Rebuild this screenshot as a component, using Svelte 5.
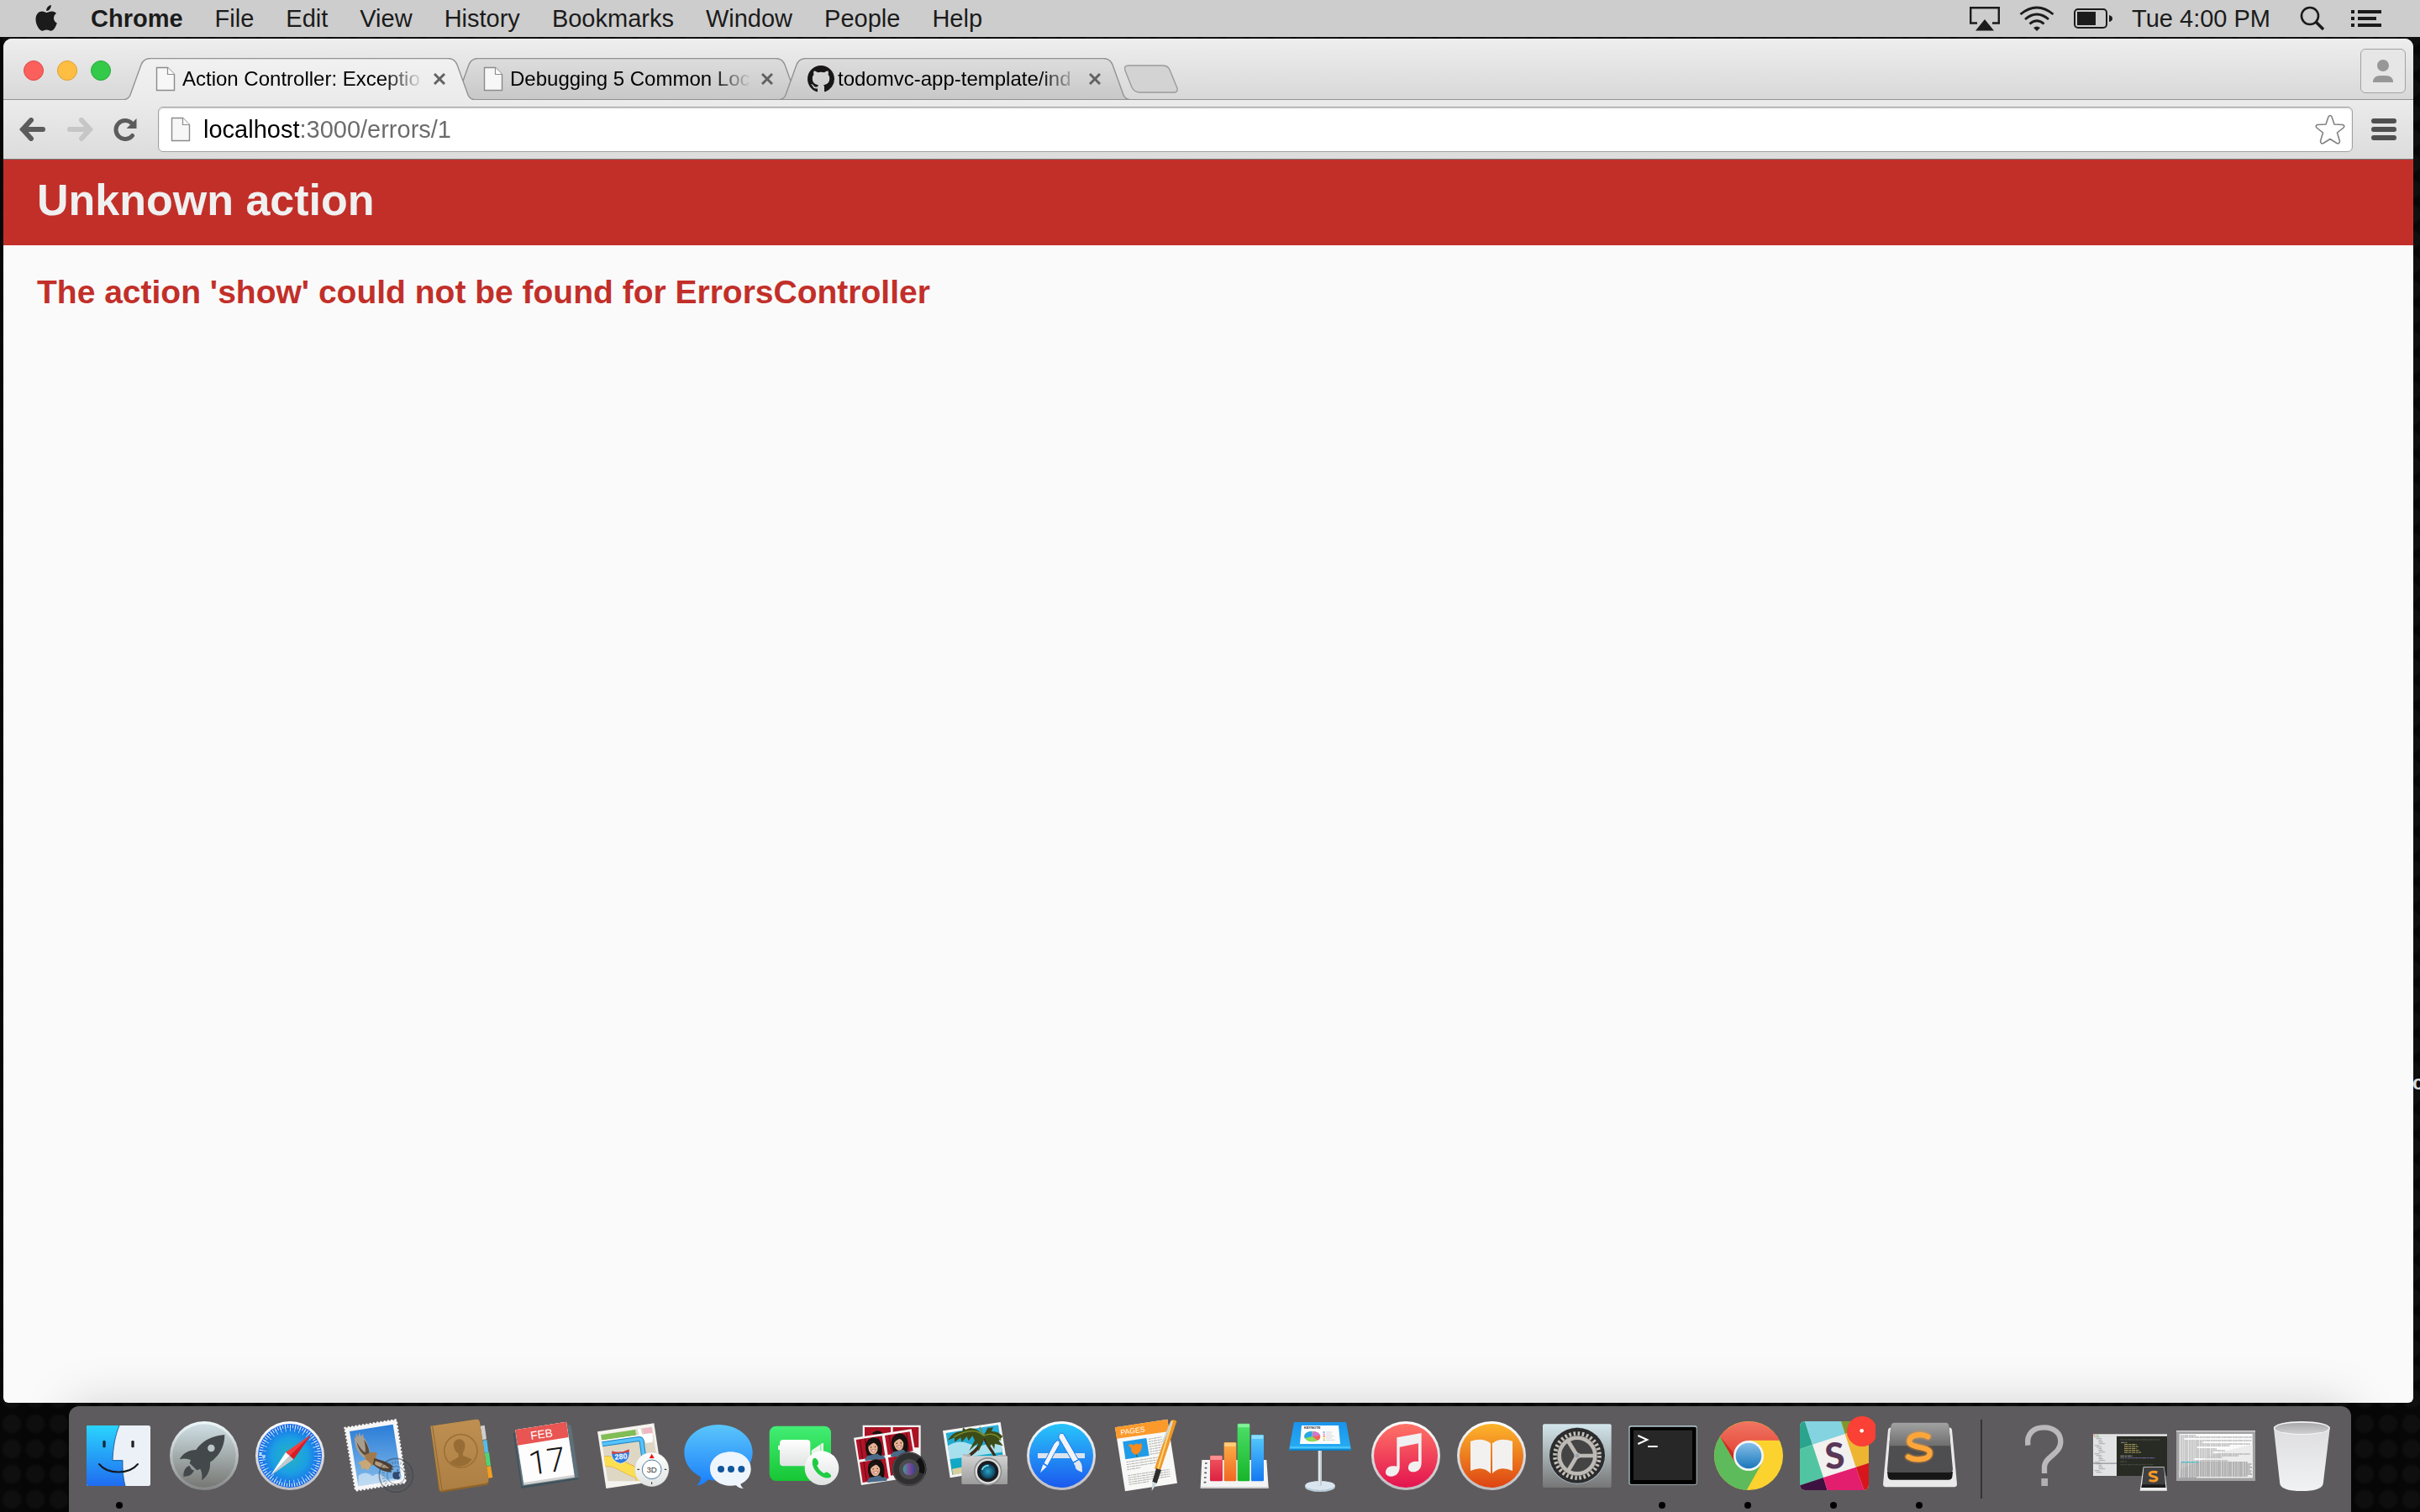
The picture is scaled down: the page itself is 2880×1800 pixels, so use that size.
<script>
  const menus = ['File', 'Edit', 'View', 'History', 'Bookmarks', 'Window', 'People', 'Help'];
  const tabs = [
    { title: 'Action Controller: Exceptio', icon: 'page', active: true },
    { title: 'Debugging 5 Common Loc', icon: 'page', active: false },
    { title: 'todomvc-app-template/ind', icon: 'github', active: false }
  ];
  let address = $state('localhost:3000/errors/1');

  const sidebarRows = Array.from({ length: 22 }, (_, i) => ({ y: 182 + i * 6, x: [98, 104, 112, 112, 114][i % 5], w: [18, 12, 22, 20, 16][(i * 3) % 5] }));
  const codeRows = [
    { x: 190, y: 192, w: 140, c: '#55564a' }, { x: 192, y: 202, w: 22, c: '#8f8f80' },
    { x: 204, y: 209, w: 44, c: '#b3a85c' }, { x: 204, y: 216, w: 52, c: '#b3a85c' },
    { x: 204, y: 223, w: 44, c: '#b3a85c' }, { x: 204, y: 230, w: 54, c: '#b3a85c' },
    { x: 204, y: 237, w: 60, c: '#b3a85c' }, { x: 190, y: 250, w: 44, c: '#9a9a8c' },
    { x: 190, y: 257, w: 124, c: '#7568a0' }, { x: 190, y: 270, w: 22, c: '#55564a' },
    { x: 190, y: 281, w: 120, c: '#4a4b40' }
  ];
  const logRows = Array.from({ length: 26 }, (_, i) => ({
    y: 177 + i * 6,
    w: [56, 256, 14, 254, 80, 250, 176, 60, 130, 160, 118, 250, 208, 150, 50, 170, 240, 254, 250, 256, 248, 254, 252, 256, 240, 58][i],
    strong: i > 15
  }));
</script>

{#snippet page()}
  <svg viewBox="0 0 24 30" class="page-icon" aria-hidden="true">
    <path d="M1.5 1.5H14.5L22.5 9.500V28.500H1.500Z" fill="#f7f7f7" stroke="#8b8b8b" stroke-width="1.400" />
    <path d="M14.500 1.500V9.500H22.500" fill="#fff" stroke="#8b8b8b" stroke-width="1.200" />
  </svg>
{/snippet}

{#snippet github()}
  <svg viewBox="0 0 16 16" class="github-icon" aria-hidden="true">
    <path fill="#181616" d="M8 0C3.58 0 0 3.58 0 8c0 3.54 2.29 6.53 5.47 7.59.4.07.55-.17.55-.38 0-.19-.01-.82-.01-1.49-2.01.37-2.53-.49-2.69-.94-.09-.23-.48-.94-.82-1.13-.28-.15-.68-.52-.01-.53.63-.01 1.08.58 1.23.82.72 1.21 1.87.87 2.33.66.07-.52.28-.87.51-1.07-1.78-.2-3.64-.89-3.64-3.95 0-.87.31-1.59.82-2.15-.08-.2-.36-1.02.08-2.12 0 0 .67-.21 2.2.82.64-.18 1.32-.27 2-.27s1.36.09 2 .27c1.53-1.04 2.200-.82 2.200-.82.44 1.100.16 1.920.08 2.120.51.56.82 1.270.82 2.150 0 3.070-1.870 3.750-3.650 3.950.29.25.54.73.54 1.480 0 1.070-.01 1.930-.01 2.200 0 .21.15.46.55.38A8.010 8.010 0 0 0 16 8c0-4.420-3.580-8-8-8z" />
  </svg>
{/snippet}

{#snippet finder()}
  <rect x="129" y="141" width="228" height="216" rx="7" fill="#ecf1f8" />
  <path d="M136 141H246C230 180 224 220 222 265H258C257 300 260 330 267 357H136Q129 357 129 350V148Q129 141 136 141Z" fill="url(#gFinder)" />
  <path d="M246 141C230 180 224 220 222 266H258C257 300 260 330 267 357" fill="none" stroke="#14508c" stroke-width="2.500" />
  <path d="M174 279C205 317 280 317 312 279" fill="none" stroke="#14181f" stroke-width="6" stroke-linecap="round" />
  <rect x="187" y="195" width="10" height="25" rx="4" fill="#14283c" /><rect x="289" y="195" width="10" height="25" rx="4" fill="#222" />
{/snippet}

{#snippet launchpad()}
  <circle cx="549" cy="249" r="123" fill="url(#gLpRing)" />
  <circle cx="549" cy="249" r="113" fill="url(#gLp)" />
  <path d="M622 174C575 178 540 198 520 228C495 228 473 240 461 262C475 258 488 259 501 264L497 276L523 301L535 296C541 308 543 322 540 337C562 322 572 298 570 272C604 250 622 215 622 174Z" fill="#43484b" />
  <path d="M497 285C482 288 474 305 475 323C492 324 507 318 513 301L505 299Z" fill="#43484b" />
  <circle cx="574" cy="222" r="14" fill="#bcc5c8" stroke="#30363a" stroke-width="2" />
{/snippet}

{#snippet safari()}
  <circle cx="855" cy="249" r="123" fill="url(#gRing)" />
  <circle cx="855" cy="249" r="114" fill="url(#gSafari)" />
  <circle cx="855" cy="249" r="105" fill="none" stroke="#d5ebfa" stroke-width="12" pathLength="216" stroke-dasharray="1 2" />
  <circle cx="855" cy="249" r="99" fill="none" stroke="#d5ebfa" stroke-width="24" pathLength="216" stroke-dasharray="1 5" opacity=".8" />
  <path d="M931 174L840 237L855 249Z" fill="#ff5a50" /><path d="M931 174L868 262L855 249Z" fill="#c9151e" />
  <path d="M840 237L785 321L855 249Z" fill="#fff" /><path d="M868 262L785 321L855 249Z" fill="#c3c9cd" />
  <path d="M931 174L840 237L868 262Z" fill="#e8222a" opacity=".5" />
{/snippet}

{#snippet mail()}
  <path d="M1052 150L1234 121L1268 344L1090 373Z" fill="#f6f6f6" stroke="#f6f6f6" stroke-width="9" stroke-linecap="round" stroke-dasharray="0 13" />
  <path d="M1068 162L1223 137L1254 333L1099 358Z" fill="url(#gMail)" />
  <path d="M1099 350L1100 320Q1125 300 1150 322Q1175 300 1200 335L1254 325V333L1099 358Z" fill="#e8f0f8" opacity=".6" />
  <path d="M1086 178L1092 188L1091 168L1100 182L1102 165L1109 180L1116 170L1118 184C1132 198 1139 222 1142 246L1122 258C1098 244 1084 214 1086 178Z" fill="#a89e90" />
  <path d="M1094 200C1098 224 1110 240 1126 250L1140 246C1138 222 1130 204 1120 192C1124 214 1126 226 1124 238C1112 230 1102 216 1094 200Z" fill="#5e4c3c" />
  <path d="M1122 246L1142 238L1158 236L1168 242L1162 250L1164 262L1156 282L1140 284L1126 270Z" fill="#a17a4c" />
  <path d="M1156 258C1180 264 1208 272 1224 288L1218 292L1226 298L1216 300L1218 308C1194 308 1172 298 1152 280Z" fill="#4f3f33" />
  <path d="M1160 268Q1190 276 1210 294Q1180 296 1158 280Z" fill="#b39b80" />
  <path d="M1126 262L1098 274L1108 282L1110 298L1122 294L1134 302L1146 280Z" fill="#c9a878" />
  <g fill="none" stroke="#333f50" opacity=".5"><circle cx="1234" cy="319" r="60" stroke-width="5" /><circle cx="1234" cy="319" r="32" stroke-width="3" /><circle cx="1234" cy="319" r="46" stroke-width="10" stroke-dasharray="5 5" opacity=".6" /></g>
  <path d="M1235 308C1244 302 1248 308 1248 310C1242 315 1243 323 1249 326C1246 334 1240 335 1235 332C1228 335 1222 330 1222 319C1222 309 1228 305 1235 308ZM1236 305Q1236 298 1243 296Q1243 303 1236 305Z" fill="#33486c" />
{/snippet}

{#snippet contacts()}
  <path d="M214 143L230 140L237 190L220 193Z" fill="#cfcfcf" /><path d="M222 194L238 192L244 238L228 240Z" fill="#53bde9" />
  <path d="M230 240L246 237L252 284L236 286Z" fill="#50d472" /><path d="M236 288L252 285L259 327L240 330Z" fill="#f2a01f" />
  <path d="M37 143L200 119Q211 118 213 129L245 339Q246 350 238 354L74 380L66 370Z" fill="#8f6429" />
  <path d="M37 143L200 119Q211 118 213 129L244 334Q245 344 236 347L70 374Z" fill="url(#gContacts)" />
  <path d="M44 144L78 371" stroke="#8f6730" stroke-width="3" />
  <circle cx="145" cy="232" r="59" fill="none" stroke="#9b7136" stroke-width="5" />
  <path d="M120 213C116 185 157 180 160 210C160 225 156 234 153 238V249L185 262C165 293 125 294 106 272L138 253L136 240C127 236 122 228 120 213Z" fill="#976d35" />
{/snippet}

{#snippet calendar()}
  <path d="M332 170L530 138L539 140L567 333L361 367Z" fill="#5e7079" /><path d="M332 170L361 367L567 333L565 328L364 358L338 166Z" fill="#40515a" />
  <path d="M340 157L522 128L552 326L370 354Z" fill="#d2d2d2" /><path d="M340 157L522 128L550 317L370 345Z" fill="#fdfdfd" />
  <path d="M340 157L522 128L530 183L348 212Z" fill="#e85552" />
  <text transform="translate(396 192) rotate(-8)" font-family="Liberation Sans, sans-serif" font-size="41" fill="#fff">FEB</text>
  <text transform="translate(394 318) rotate(-8)" font-family="Roboto, sans-serif" font-weight="300" font-size="118" fill="#151515">17</text>
{/snippet}

{#snippet maps()}
  <path d="M633 163L835 133L866 336L664 366Z" fill="#f5f3ee" />
  <g clip-path="url(#cMaps)">
    <path d="M640 160L850 130V340H660Z" fill="#ded7c4" />
    <path d="M645 175L768 156L771 176L648 194Z" fill="#80bd55" /><path d="M795 152L826 147L829 167L798 171Z" fill="#efb6c4" />
    <path d="M646 194L830 168V192L650 204Z" fill="#fff" /><path d="M775 153L787 152L796 190L786 192ZM800 188L830 184V200L806 204Z" fill="#fff" />
    <path d="M648 208L780 189Q789 188 791 198L798 250" fill="none" stroke="#2180c0" stroke-width="18" /><path d="M648 208L780 189Q789 188 791 198L798 250" fill="none" stroke="#54c3fb" stroke-width="12" />
    <path d="M655 270C700 262 715 290 780 312L800 350" fill="none" stroke="#e8a935" stroke-width="38" /><path d="M655 270C700 262 715 290 780 312L800 350" fill="none" stroke="#fbdf51" stroke-width="34" />
  </g>
  <path d="M684 232Q716 242 746 226C752 250 742 272 716 277C690 272 680 252 684 232Z" fill="#2f7de0" stroke="#fff" stroke-width="2" /><path d="M684 232Q716 242 746 226L747 236L685 243Z" fill="#d8453e" />
  <text transform="translate(695 263) rotate(-5)" font-family="Liberation Sans, sans-serif" font-size="27" font-weight="bold" fill="#fff">280</text>
  <circle cx="827" cy="298" r="61" fill="url(#gWhite)" stroke="#bbb" /><circle cx="827" cy="298" r="34" fill="#fff" stroke="#4f7f9d" stroke-width="3" />
  <text x="827" y="308" text-anchor="middle" font-family="Liberation Sans, sans-serif" font-size="29" fill="#333">3D</text>
  <path d="M827 242L836 258H818Z" fill="#f01414" /><path d="M775 298H783M872 298H880M827 343V351" stroke="#222" stroke-width="3" />
{/snippet}

{#snippet messages()}
  <path d="M1065 138C1132 138 1187 180 1187 237C1187 295 1132 338 1060 338C1045 338 1036 336 1028 334C1020 346 1004 354 986 356C998 347 1003 336 1001 324C965 306 943 275 943 237C943 180 998 138 1065 138Z" fill="url(#gMsg)" />
  <path d="M1108 235C1150 235 1181 261 1181 296C1181 321 1166 340 1144 350C1145 356 1149 362 1155 366C1143 366 1134 362 1128 355C1075 363 1035 333 1035 296C1035 261 1067 235 1108 235Z" fill="#eef5fd" />
  <circle cx="1074" cy="297" r="12" fill="#12569c" /><circle cx="1110" cy="297" r="12" fill="#12569c" /><circle cx="1147" cy="297" r="12" fill="#12569c" />
{/snippet}

{#snippet facetime()}
  <rect x="47" y="143" width="220" height="196" rx="24" fill="url(#gGreen)" />
  <rect x="84" y="192" width="109" height="94" rx="12" fill="url(#gWhite)" /><path d="M78 212H84V228H78ZM197 230L237 203L240 205V270L197 250Z" fill="#e9f5ea" /><path d="M230 208V250" stroke="#63d979" stroke-width="2" />
  <circle cx="234" cy="293" r="61" fill="url(#gWhite)" />
  <path d="M203 260C210 254 216 258 220 267C224 276 222 281 217 284C222 296 231 306 242 312C248 306 253 306 260 312C268 318 270 322 264 327C232 337 189 290 203 260Z" fill="#1fcc44" />
{/snippet}

{#snippet face(x, y)}
  <g transform="translate({x} {y}) rotate(-6)">
    <path d="M-34 36Q-20 16 0 20Q24 18 38 36L36 42H-33Z" fill="#4a6a88" />
    <path d="M-24 24C-34 -14 -20 -38 4 -38C30 -38 36 -10 28 28Q20 34 14 20L-14 24Z" fill="#16110f" />
    <ellipse cx="-1" cy="-2" rx="17" ry="24" fill="#e6b293" /><path d="M-18 -6Q-16 -28 6 -28Q18 -24 18 -2Q10 -18 2 -19Q-10 -16 -18 -6Z" fill="#16110f" />
    <path d="M-10 6Q0 20 9 6Z" fill="#fff" stroke="#a84c40" stroke-width="2" /><circle cx="-8" cy="-4" r="2" fill="#311" /><circle cx="7" cy="-4" r="2" fill="#311" />
  </g>
{/snippet}

{#snippet photobooth()}
  <path d="M380 140H587V300H380Z" fill="#f4f4f4" /><path d="M387 147H480V290H387ZM488 147H580V220H488Z" fill="#ab1224" /><path d="M412 172Q432 148 456 172ZM516 164Q540 146 556 172Z" fill="#16110f" />
  <path d="M348 185L554 154L582 322L375 354Z" fill="#f4f4f4" />
  <path d="M356 192L449 178L460 248L367 263ZM459 177L548 163L560 232L470 246ZM369 272L461 257L473 330L380 345ZM471 256L562 240L570 300L480 320Z" fill="#b01327" />
  <path d="M370 192L380 260M388 188L398 256M436 182L444 250M474 176L484 240M536 167L546 232M384 270L394 338M444 262L454 330" stroke="#780a18" stroke-width="4" />
  {@render face(418, 222)}{@render face(510, 208)}{@render face(426, 300)}
  <circle cx="546" cy="296" r="61" fill="#303030" /><path d="M546 296L588 252A61 61 0 0 1 604 316Z" fill="#111" /><circle cx="546" cy="296" r="58" fill="none" stroke="#555" stroke-width="3" />
  <circle cx="546" cy="297" r="36" fill="#4b4b4e" /><circle cx="546" cy="297" r="22" fill="url(#gLens)" />
{/snippet}

{#snippet iphoto()}
  <path d="M666 160L872 129L898 294L692 328Z" fill="#f5f5f5" />
  <path d="M677 168L864 139L886 282L700 317Z" fill="url(#gBeach)" />
  <path d="M684 214Q720 190 760 206Q800 226 872 190L878 236L690 262Z" fill="#d9f1f8" opacity=".75" />
  <path d="M699 296L790 280V300L702 318Z" fill="#d9cf9b" />
  <path d="M804 184C800 210 775 230 745 256L756 258C786 238 806 218 812 192C820 214 838 234 848 252L856 248C846 226 826 206 818 186Z" fill="#3e2c18" />
  <path d="M812 178C790 150 766 146 748 156L738 148L736 162C712 160 694 176 684 194L708 184L708 200L730 184L734 200L752 180L758 196L772 178L780 194L760 232L790 204L794 234L806 204L816 184L830 222L840 208L850 226L852 206L882 214L866 196L880 180C868 166 854 160 840 162L846 148L826 150Z" fill="#3d4c16" />
  <path d="M812 178C790 156 760 152 706 182M812 178C836 166 860 172 874 194M812 178L798 146" stroke="#7b8a2a" stroke-width="4" fill="none" />
  <rect x="733" y="250" width="164" height="101" rx="4" fill="url(#gCam)" /><path d="M738 250V244H765V250ZM862 252V246H890V252Z" fill="#b7b7b7" />
  <circle cx="827" cy="305" r="50" fill="#8d8d8d" /><circle cx="827" cy="305" r="45" fill="#dedede" /><circle cx="827" cy="305" r="38" fill="#191c20" /><circle cx="827" cy="305" r="27" fill="url(#gBlueLens)" /><path d="M806 300Q812 284 830 284" stroke="#79d8ea" stroke-width="5" fill="none" />
{/snippet}

{#snippet appstore()}
  <circle cx="1089" cy="249" r="123" fill="url(#gRing)" /><circle cx="1089" cy="249" r="114" fill="url(#gStore)" />
  <path d="M1005 240H1173V258H1005Z" fill="#dbe4ee" />
  <path d="M1062 207L1073 195Q1079 193 1083 199L1083 208L1040 285L1026 276Z" fill="#f1f4f8" stroke="#1d79ec" stroke-width="3" />
  <path d="M1024 280L1037 288L1014 310Z" fill="#f1f4f8" />
  <path d="M1080 176Q1086 166 1096 169L1150 263L1131 273L1080 185Z" fill="#f1f4f8" stroke="#1d79ec" stroke-width="3" />
  <path d="M1133 276L1152 265C1166 279 1163 292 1164 308C1148 304 1138 296 1139 286Z" fill="#e3e8ef" />
{/snippet}

{#snippet pages()}
  <path d="M51 148L238 119L273 347L87 376Z" fill="#f8f8f6" /><path d="M51 148L238 119L245 162L57 188Z" fill="#fb9a2b" />
  <text transform="translate(72 175) rotate(-8)" font-family="Liberation Sans, sans-serif" font-size="26" fill="#fff">PAGES</text>
  <path d="M79 199L163 186L173 249L88 262Z" fill="#1f9be8" />
  <path d="M126 240L130 254" stroke="#466a2c" stroke-width="4" /><path d="M98 211Q108 204 118 212Q128 200 134 209L145 204Q150 218 142 232Q132 248 122 244Q108 240 108 222Z" fill="#f58a1e" />
  <g stroke="#9b9b9b" stroke-width="2.500" stroke-dasharray="9 2 5 2 12 2">
    {#each [0, 1, 2, 3, 4, 5, 6] as i}<path d="M{170 + i} {190 + i * 9}l48 -8" />{/each}
    {#each [0, 1, 2, 3] as i}<path d="M{91 + i} {272 + i * 9}l{i === 3 ? 50 : 116} {i === 3 ? -8 : -18}" />{/each}
    {#each [0, 1, 2, 3, 4] as i}<path d="M{97 + i} {320 + i * 8}l{i === 4 ? 70 : 148} {i === 4 ? -11 : -22}" />{/each}
  </g>
  <path d="M250 124Q262 116 271 126L213 302L192 295Z" fill="#ef9826" /><path d="M256 124L204 296" stroke="#ffd37e" stroke-width="6" /><path d="M250 126L220 196L224 204L256 130Z" fill="#c7d6dc" />
  <path d="M198 294L216 300L200 348L184 342Z" fill="#2d2d2d" /><path d="M184 342L200 348L182 375Z" fill="#cfd9dd" />
{/snippet}

{#snippet numbers()}
  <path d="M361 264H592L599 364H356Z" fill="#f4f4f4" /><path d="M356 360H599V366H356Z" fill="#cfcfcf" />
  <path d="M372 276h8M371 293h8M370 310h8M369 327h8M368 344h8" stroke="#555" stroke-width="5" />
  <rect x="390" y="248" width="45" height="92" rx="4" fill="url(#gBarRed)" /><rect x="391" y="249" width="42" height="15" rx="4" fill="#ff8e91" />
  <rect x="440" y="201" width="44" height="139" rx="4" fill="url(#gBarOrange)" /><rect x="441" y="203" width="41" height="13" rx="4" fill="#ffcb7e" />
  <rect x="488" y="134" width="44" height="206" rx="4" fill="url(#gBarGreen)" /><rect x="490" y="136" width="41" height="12" rx="4" fill="#86f09b" />
  <rect x="537" y="174" width="45" height="166" rx="4" fill="url(#gBarBlue)" /><rect x="539" y="176" width="41" height="13" rx="4" fill="#8bdcff" />
{/snippet}

{#snippet keynote()}
  <ellipse cx="783" cy="359" rx="54" ry="19" fill="#b9cad9" /><ellipse cx="783" cy="355" rx="53" ry="16" fill="#d9e6f0" /><path d="M776 230H789V354Q783 358 776 354Z" fill="#c2ccd5" /><path d="M780 230V354" stroke="#eef2f6" stroke-width="4" />
  <path d="M690 129H876L893 222V230H673V222Z" fill="url(#gKey)" /><path d="M676 219H890" stroke="#75dcfc" stroke-width="3" /><path d="M673 226H893V231H673Z" fill="#0d7cc0" />
  <path d="M717 141H849L855 207H711Z" fill="#fbfbfb" /><text x="726" y="153" font-family="Liberation Sans, sans-serif" font-size="12" font-weight="bold" fill="#333">KEYNOTE</text>
  <ellipse cx="755" cy="180" rx="29" ry="19" fill="#8bdb5d" /><path d="M755 180L728 187Q722 164 753 161Z" fill="#27a5ee" /><path d="M755 180L758 161Q780 164 783 176Z" fill="#d273de" /><path d="M755 180L783 176Q786 190 774 194Z" fill="#f2625c" />
  <path d="M794 165h6" stroke="#27a5ee" stroke-width="4" /><path d="M794 172h6" stroke="#d273de" stroke-width="4" /><path d="M794 179h6" stroke="#e44" stroke-width="4" /><path d="M794 186h6" stroke="#fbcf4c" stroke-width="4" /><path d="M794 193h6" stroke="#7ccc4c" stroke-width="4" />
  <path d="M804 165h23M804 172h19M804 179h28M804 186h21M804 193h32" stroke="#c4c4c4" stroke-width="2" />
{/snippet}

{#snippet itunes()}
  <circle cx="1089" cy="249" r="123" fill="url(#gRing)" /><circle cx="1089" cy="249" r="114" fill="url(#gTunes)" />
  <path d="M1057 184L1145 168V275C1145 295 1132 306 1116 307C1100 307 1095 295 1099 285C1103 272 1118 268 1134 270V205L1067 218V290C1067 310 1054 322 1036 323C1018 322 1014 309 1019 299C1024 287 1039 284 1057 287Z" fill="#f1f0f1" />
{/snippet}

{#snippet ibooks()}
  <circle cx="165" cy="249" r="123" fill="url(#gRing)" /><circle cx="165" cy="249" r="114" fill="url(#gBooks)" />
  <path d="M162 205Q135 182 90 197V303Q135 282 162 313ZM168 205Q195 182 240 197V303Q195 282 168 313Z" fill="#f2f1ef" />
{/snippet}

{#snippet sysprefs()}
  <rect x="348" y="136" width="245" height="227" rx="6" fill="url(#gPrefs)" />
  <circle cx="471" cy="249" r="101" fill="#a9b9c6" /><circle cx="471" cy="248" r="99" fill="#2c2c2c" />
  <circle cx="471" cy="249" r="78" fill="none" stroke="#c4c1bc" stroke-width="17" pathLength="64" stroke-dasharray="1 1" />
  <circle cx="471" cy="249" r="64" fill="#444" stroke="#bdb9b4" stroke-width="14" />
  <circle cx="471" cy="249" r="72" fill="none" stroke="#6d6a67" stroke-width="2" />
  <path d="M471 249L437 194M471 249H530M471 249L437 306" stroke="#bdb9b4" stroke-width="14" />
  <circle cx="471" cy="249" r="10" fill="#9fa4a8" stroke="#d6d6d6" stroke-width="2" />
{/snippet}

{#snippet terminal()}
  <rect x="655" y="141" width="244" height="212" rx="8" fill="#a9bec4" /><rect x="659" y="146" width="237" height="205" rx="5" fill="#000" /><rect x="672" y="158" width="210" height="178" fill="#272727" />
  <path d="M688 177L721 192L688 207" fill="none" stroke="#fff" stroke-width="6" /><path d="M723 216H758" stroke="#fff" stroke-width="6" />
{/snippet}

{#snippet chrome()}
  <circle cx="1083" cy="249" r="123" fill="#fcd22f" />
  <path d="M981 181A123 123 0 0 1 1193 194H1083L1036 276Z" fill="url(#gChRed)" />
  <path d="M981 181A123 123 0 0 0 1076 372L1130 276Q1083 310 1036 276Z" fill="#5dbb5c" />
  <path d="M981 181L1036 276L1030 240Z" fill="#c92c25" /><circle cx="1083" cy="249" r="54" fill="#f3f5f6" /><circle cx="1083" cy="249" r="46" fill="url(#gChBlue)" />
{/snippet}

{#snippet slack()}
  <g clip-path="url(#cSlack)">
    <path d="M36 126H282V372H36Z" fill="#f2f1ef" />
    <path d="M36 126H54L81 209L36 226Z" fill="#2aa48d" /><path d="M54 126H183L197 171L81 209Z" fill="#84d3e0" /><path d="M183 126H282V148L197 171Z" fill="#7c9a2c" />
    <path d="M36 226L81 209L120 327L36 355Z" fill="#51c5a2" /><path d="M197 171L282 146V276L236 290Z" fill="#edb531" />
    <path d="M36 355L120 327L134 372H36Z" fill="#3d1240" /><path d="M120 327L236 290L265 372H134Z" fill="#e31e6e" /><path d="M236 290L282 275V372H265Z" fill="#d6161b" />
  </g>
  <text x="160" y="295" text-anchor="middle" font-family="Lato, sans-serif" font-weight="900" font-size="128" fill="#5a3758" transform="rotate(-4 160 250)">S</text>
  <circle cx="258" cy="162" r="54" fill="#fb4035" /><circle cx="257" cy="160" r="7" fill="#fff" />
{/snippet}

{#snippet keycap()}
  <path d="M364 148H569Q577 148 579 156L597 350Q597 360 587 361H343Q333 360 333 350L351 156Q353 148 364 148Z" fill="#e9e9e9" />
  <path d="M348 306L350 324Q352 335 364 335H566Q579 335 580 324L582 306Z" fill="#161616" />
  <path d="M374 131H557Q567 132 568 142L582 298Q582 308 572 309H357Q347 308 348 298L361 142Q363 132 374 131Z" fill="#4e4e50" />
  <path d="M374 131H557Q567 132 568 142L574 214H355L361 142Q363 132 374 131Z" fill="url(#gKeycap)" />
  <path d="M493 181C466 168 427 174 427 198C427 224 500 214 500 239C500 264 446 268 423 253" fill="none" stroke="#ff9d28" stroke-opacity=".25" stroke-width="30" stroke-linecap="round" />
  <path d="M493 181C466 168 427 174 427 198C427 224 500 214 500 239C500 264 446 268 423 253" fill="none" stroke="#ffa63a" stroke-width="19" stroke-linecap="round" />
{/snippet}

{#snippet help()}
  <path d="M850 212C845 170 870 148 908 148C945 148 967 170 967 199C967 245 910 250 909 290V312" fill="none" stroke="#b9b8ba" stroke-width="19" />
  <rect x="898" y="330" width="23" height="27" fill="#b0afb1" />
{/snippet}

{#snippet editorWindow()}
  <path d="M93 172H357V321H93Z" fill="#282a24" /><path d="M93 172H357V179H93Z" fill="#ececec" /><path d="M93 178H177V321H93Z" fill="#e2e3e5" /><path d="M93 274H177V279H93Z" fill="#a6a6a8" />
  <circle cx="97" cy="176" r="2" fill="#f55" /><circle cx="103" cy="176" r="2" fill="#fb4" /><circle cx="109" cy="176" r="2" fill="#3c5" />
  {#each sidebarRows as r}<path d="M{r.x} {r.y}h{r.w}" stroke="#8d8d90" stroke-width="2" />{/each}
  {#each codeRows as r}<path d="M{r.x} {r.y}h{r.w}" stroke={r.c} stroke-width="3" stroke-dasharray="14 2 8 2" />{/each}
  <path d="M272 289H347L357 374H260Z" fill="#ededed" /><path d="M274 291H346L352 362H266Z" fill="#404042" /><path d="M267 352H351L352 363H265Z" fill="#1b1b1b" />
  <path d="M322 309C310 304 295 307 295 315C295 326 321 320 321 331C321 341 303 341 293 336" fill="none" stroke="#f89a28" stroke-width="9" />
{/snippet}

{#snippet logWindow()}
  <path d="M390 159H672V339H390Z" fill="#a3a3a5" /><path d="M390 159H672V163H390Z" fill="#d9d9d9" /><path d="M401 171H662V328H401Z" fill="#fafafa" /><path d="M535 240L662 208V328H401V300Z" fill="#ececec" />
  {#each logRows as r}<path d="M404 {r.y}h{r.w}" stroke={r.strong ? '#7a7a7a' : '#9a9a9a'} stroke-width="3" stroke-dasharray="9 1 5 1 13 2 7 1" />{/each}
  <path d="M408 272h60" stroke="#35bfc9" stroke-width="4" stroke-dasharray="14 3" />
{/snippet}

{#snippet trash()}
  <path d="M738 152L760 350Q768 375 838 375Q906 375 914 350L938 152Z" fill="url(#gTrash)" />
  <ellipse cx="838" cy="150" rx="101" ry="24" fill="#f4f4f5" /><ellipse cx="838" cy="151" rx="96" ry="20" fill="url(#gTrashIn)" />
{/snippet}

{#snippet app(label, x, running, art)}
  <button class="dock-item" aria-label={label}>
    <svg viewBox="{x} 72 306 378" aria-hidden="true">{@render art()}</svg>
    {#if running}<i class="running"></i>{/if}
  </button>
{/snippet}

<svg class="defs" aria-hidden="true">
  <defs>
    {#each [
      ['gFinder', '#2ad4fd', '#1f6cf0'], ['gLpRing', '#eff9fc', '#858788'], ['gLp', '#cfdfe4', '#777874'], ['gRing', '#ffffff', '#bdbdc1'],
      ['gMail', '#2a7cd8', '#86bdea'], ['gContacts', '#be8f51', '#ad7f43'], ['gWhite', '#ffffff', '#dfe3e1'], ['gMsg', '#5bc6fb', '#1a7efb'],
      ['gGreen', '#42ee74', '#17c634'], ['gBeach', '#2aaede', '#0aa6bd'], ['gCam', '#d2d2d2', '#9b9b9b'], ['gStore', '#29c5fa', '#1b59ee'],
      ['gBarRed', '#f0585f', '#dd2142'], ['gBarOrange', '#fcb045', '#f06623'], ['gBarGreen', '#4ce068', '#17b52a'], ['gBarBlue', '#55ccfb', '#1478f2'],
      ['gKey', '#1a93ec', '#27aef4'], ['gTunes', '#ff7366', '#e3134f'], ['gBooks', '#fdb52b', '#dd4413'], ['gPrefs', '#d3e6ec', '#767676'],
      ['gChRed', '#f07561', '#e23a2f'], ['gChBlue', '#85bfe9', '#1a77ba'], ['gKeycap', '#a2a2a2', '#6e6e6e'],
      ['gTrash', '#dedee1', '#f1f2f4'], ['gTrashIn', '#a7a7a9', '#cfcfd1'], ['tabOn', '#f1f1f1', '#ebebeb'], ['tabOff', '#dddddd', '#c8c8c9']
    ] as [id, a, b]}
      <linearGradient {id} x1="0" y1="0" x2="0" y2="1"><stop offset="0" stop-color={a} /><stop offset="1" stop-color={b} /></linearGradient>
    {/each}
    <radialGradient id="gSafari"><stop offset="0" stop-color="#26b3bd" /><stop offset=".55" stop-color="#1b9fe4" /><stop offset="1" stop-color="#1a66e8" /></radialGradient>
    <linearGradient id="gLens"><stop offset="0" stop-color="#3c9fa0" /><stop offset=".5" stop-color="#7f4a94" /><stop offset="1" stop-color="#33429c" /></linearGradient>
    <radialGradient id="gBlueLens"><stop offset="0" stop-color="#27a3c4" /><stop offset="1" stop-color="#0c3d58" /></radialGradient>
    <clipPath id="cMaps"><path d="M645 173L828 146L856 328L672 354Z" /></clipPath>
    <clipPath id="cSlack"><rect x="36" y="126" width="246" height="246" rx="18" /></clipPath>
  </defs>
</svg>

<div class="desktop">
  <span class="desktop-label">c</span>
  <header class="menubar">
    <nav class="menus" aria-label="Application menu">
      <button class="apple" aria-label="Apple menu">
        <svg viewBox="0 0 26 32" aria-hidden="true"><path fill="#1b1b1b" d="M13.500 9C15 9 17 7.300 20 7.400C22 7.500 24 8.500 25 10C20.500 13 21.300 19.500 25.800 21.500C24.500 25.500 21.800 30.800 18.500 30.800C16.500 30.800 16 29.600 13.500 29.600C11 29.600 10.300 30.800 8.500 30.800C5 30.800 0.500 23.500 0.500 17C0.500 10.500 4.500 7.400 8 7.400C10.500 7.400 12 9 13.500 9ZM13.200 7C13 3.500 15.800 0.300 18.800 0C19.300 3.600 16.200 7.200 13.200 7Z" /></svg>
      </button>
      <button class="current">Chrome</button>
      {#each menus as m}<button>{m}</button>{/each}
    </nav>
    <div class="status">
      <button aria-label="AirPlay"><svg width="36" height="30" viewBox="0 0 36 30"><path d="M9 20.500H1.200V2.200H34.800V20.500H27" fill="none" stroke="#1b1b1b" stroke-width="2.400" /><path d="M18 16L29 29.500H7Z" fill="#1b1b1b" /></svg></button>
      <button aria-label="Wi-Fi"><svg width="42" height="30" viewBox="0 0 42 30"><g fill="none" stroke="#1b1b1b" stroke-width="2.800"><path d="M1.500 10Q21 -6 40.500 10" /><path d="M7 16Q21 4 35 16" /><path d="M12.500 21.500Q21 14 29.500 21.500" /></g><path d="M17 26Q21 23 25 26L21 30Z" fill="#1b1b1b" /></svg></button>
      <button aria-label="Battery"><svg width="46" height="24" viewBox="0 0 46 24"><rect x="1" y="1" width="38" height="22" rx="4" fill="none" stroke="#1b1b1b" stroke-width="2" /><rect x="4" y="4" width="22" height="16" fill="#1b1b1b" /><path d="M42 8Q46 9 46 12Q46 15 42 16Z" fill="#1b1b1b" /></svg></button>
      <time>Tue 4:00 PM</time>
      <button class="search" aria-label="Spotlight"><svg width="30" height="30" viewBox="0 0 30 30"><circle cx="12" cy="12" r="10" fill="none" stroke="#1b1b1b" stroke-width="2.600" /><path d="M19 19L28 28" stroke="#1b1b1b" stroke-width="3.500" /></svg></button>
      <button aria-label="Notification Center"><svg width="36" height="20" viewBox="0 0 36 20"><path d="M0 2H4M8 2H36M0 10H4M8 10H30M0 18H4M8 18H36" stroke="#1b1b1b" stroke-width="4" /></svg></button>
    </div>
  </header>

  <main class="window">
    <div class="strip">
      <div class="lights">
        <button class="red" aria-label="Close window"></button><button class="yellow" aria-label="Minimize"></button><button class="green" aria-label="Zoom"></button>
      </div>
      <div class="tabs">
        {#each tabs as t}
          <div class="tab" class:active={t.active}>
            <svg class="shape" viewBox="0 0 416 50" aria-hidden="true">
              {#if t.active}
                <path d="M0 50V49.500Q5 49 7 44L20 8Q23 .5 31 .5H385Q393 .5 396 8L409 44Q411 49 416 49.500V50Z" fill="url(#tabOn)" />
              {:else}
                <path d="M2 49Q6 48 7 44L20 8Q23 .5 31 .5H385Q393 .5 396 8L409 44Q410 48 414 49Z" fill="url(#tabOff)" />
              {/if}
              <path d="M0 49.500Q5 49 7 44L20 8Q23 .5 31 .5H385Q393 .5 396 8L409 44Q411 49 416 49.500" fill="none" stroke="#929292" stroke-width="1.400" />
            </svg>
            <button class="tab-main">
              <span class="favicon">{#if t.icon === 'page'}{@render page()}{:else}{@render github()}{/if}</span>
              <span class="title">{t.title}</span>
            </button>
            <button class="tab-close" aria-label="Close tab"><svg viewBox="0 0 14 14"><path d="M1 1L13 13M13 1L1 13" stroke="#626262" stroke-width="3" /></svg></button>
          </div>
        {/each}
      </div>
      <button class="new-tab" aria-label="New tab"><svg width="66" height="34" viewBox="0 0 66 34"><path d="M6 1H46Q53 1 55 6L64 28Q65 33 60 33H20Q13 33 10 27L2 7Q0 1 6 1Z" fill="#d3d3d3" stroke="#9b9b9b" stroke-width="1.400" /></svg></button>
      <button class="profile" aria-label="Profile"><svg width="24" height="28" viewBox="0 0 24 28"><circle cx="12" cy="7" r="7" fill="#979797" /><path d="M0 27Q0 19 9 19H15Q24 19 24 27Z" fill="#979797" /></svg></button>
    </div>

    <div class="toolbar">
      <button class="nav" aria-label="Back"><svg width="32" height="28" viewBox="0 0 32 28"><path d="M14 3L4 14L14 25M4 14H28" fill="none" stroke="#5c5c5c" stroke-width="6" stroke-linecap="round" /></svg></button>
      <button class="nav" aria-label="Forward" disabled><svg width="32" height="28" viewBox="0 0 32 28"><path d="M18 3L28 14L18 25M28 14H4" fill="none" stroke="#c6c6c6" stroke-width="6" stroke-linecap="round" /></svg></button>
      <button class="nav" aria-label="Reload"><svg width="28" height="28" viewBox="0 0 28 28"><path d="M21.500 6.500A11 11 0 1 0 22.500 21.500" fill="none" stroke="#5c5c5c" stroke-width="5" stroke-linecap="round" /><path d="M27.500 1V13H15.500Z" fill="#5c5c5c" /></svg></button>
      <form class="omnibox" onsubmit={(e) => e.preventDefault()}>
        {@render page()}
        <input aria-label="Address" spellcheck="false" bind:value={address} />
        <button type="button" aria-label="Bookmark this page"><svg width="36" height="36" viewBox="0 0 36 36"><path d="M16 3Q18 0 20 3L23 12L33 12.500Q36 13.500 34 16L26.500 22L29.500 32Q29 36 26 34.500L18 29.500L10 34.500Q7 36 6.500 32L9.500 22L2 16Q0 13.500 3 12.500L13 12Z" fill="#fff" stroke="#808080" stroke-width="1.600" /></svg></button>
      </form>
      <button class="nav" aria-label="Chrome menu"><svg width="30" height="26" viewBox="0 0 30 26"><path d="M3 3H27M3 13H27M3 23H27" stroke="#505050" stroke-width="6" stroke-linecap="round" /></svg></button>
    </div>

    <article class="page">
      <header><h1>Unknown action</h1></header>
      <h2>The action 'show' could not be found for ErrorsController</h2>
    </article>
  </main>

  <nav class="dock" aria-label="Dock">
    {@render app('Finder', 90, true, finder)}
    {@render app('Launchpad', 396, false, launchpad)}
    {@render app('Safari', 702, false, safari)}
    {@render app('Mail', 1008, false, mail)}
    {@render app('Contacts', -6, false, contacts)}
    {@render app('Calendar', 300, false, calendar)}
    {@render app('Maps', 606, false, maps)}
    {@render app('Messages', 912, false, messages)}
    {@render app('FaceTime', 18, false, facetime)}
    {@render app('Photo Booth', 324, false, photobooth)}
    {@render app('iPhoto', 630, false, iphoto)}
    {@render app('App Store', 936, false, appstore)}
    {@render app('Pages', 12, false, pages)}
    {@render app('Numbers', 318, false, numbers)}
    {@render app('Keynote', 624, false, keynote)}
    {@render app('iTunes', 930, false, itunes)}
    {@render app('iBooks', 6, false, ibooks)}
    {@render app('System Preferences', 312, false, sysprefs)}
    {@render app('Terminal', 618, true, terminal)}
    {@render app('Chrome', 924, true, chrome)}
    {@render app('Slack', 0, true, slack)}
    {@render app('Sublime Text', 306, true, keycap)}
    <span class="divider"></span>
    {@render app('Missing item', 756, false, help)}
    {@render app('Editor window', 72, false, editorWindow)}
    {@render app('Terminal window', 378, false, logWindow)}
    {@render app('Trash', 684, false, trash)}
  </nav>
</div>

<style>
  :global(body) { margin: 0; background: #070707; }
  * { box-sizing: border-box; }
  button { appearance: none; border: 0; padding: 0; margin: 0; background: none; font: inherit; color: inherit; }
  svg { display: block; flex: none; }
  .defs { position: absolute; width: 0; height: 0; }
  .desktop {
    position: relative; min-height: 100vh; display: grid; grid-template-rows: auto 1fr auto; overflow: hidden;
    font-family: 'Liberation Sans', Arial, sans-serif; color: #1b1b1b;
    background: #070707 radial-gradient(circle, #0f0f0f 0 9px, transparent 13px) 0 0 / 28px 30px;
  }
  .desktop-label { position: absolute; left: calc(100% - 9px); top: 1273px; font-size: 24px; line-height: 32px; font-weight: bold; color: #ddd; }

  .menubar { height: 44px; display: flex; justify-content: space-between; align-items: center; padding: 0 46px 0 41px; background: #cdcdcd; font-size: 29px; line-height: 44px; white-space: nowrap; }
  .menus { display: flex; align-items: center; gap: 38px; }
  .apple { width: 29px; }
  .apple svg { width: 28px; height: 32px; }
  .current { font-weight: bold; }
  .status { display: flex; align-items: center; gap: 23px; }
  .search { margin: 0 8px 0 12px; }

  .window { display: flex; flex-direction: column; margin: 2px 8px 4px 4px; border-radius: 10px 10px 6px 6px; overflow: hidden; background: #fafafa; position: relative; }
  .strip { display: flex; height: 73px; align-items: flex-end; background: linear-gradient(#eee, #d8d8d8 72px, #929292 72px); }
  .lights { display: flex; gap: 16px; align-self: center; padding: 3px 1px 0 24px; }
  .lights button { width: 24px; height: 24px; border-radius: 50%; border-width: 1px; border-style: solid; }
  .lights .red { background: #fc605c; border-color: #df4744; }
  .lights .yellow { background: #fdbe41; border-color: #de9f34; }
  .lights .green { background: #34ca49; border-color: #27a839; }
  .tabs { display: flex; padding-left: 15px; }
  .tab { position: relative; display: flex; align-items: center; width: 416px; height: 50px; margin-right: -26px; }
  .tab.active { z-index: 1; }
  .shape { position: absolute; inset: 0; width: 416px; height: 50px; }
  .tab-main { position: relative; display: flex; align-items: center; gap: 4px; margin-left: 33px; height: 50px; font-size: 24px; line-height: 32px; color: #000; }
  .favicon { width: 32px; display: grid; place-items: center; }
  .page-icon { width: 24px; height: 30px; }
  .github-icon { width: 32px; height: 32px; }
  .title { width: 287px; white-space: nowrap; text-align: left; mask-image: linear-gradient(90deg, #000 240px, transparent 287px); }
  .tab-close { position: relative; margin-left: 12px; }
  .tab-close svg { width: 14px; height: 14px; }
  .new-tab { margin: 0 auto 8px 19px; }
  .profile { width: 54px; height: 53px; margin: 0 9px 8px 0; border: 1px solid #a2a2a2; border-radius: 6px; display: grid; place-items: center; background: #e6e6e6; }

  .toolbar { display: flex; align-items: center; gap: 24px; height: 71px; padding: 0 20px 0 19px; background: linear-gradient(#ebebeb, #dcdcdc); border-bottom: 1px solid #777; }
  .omnibox { flex: 1; min-width: 0; display: flex; align-items: center; height: 54px; margin-left: 1px; margin-right: -2px; padding: 0 8px 0 14px; background: #fff; border: 1px solid #a0a0a0; border-radius: 6px; box-shadow: inset 0 1px 2px #ccc; }
  .omnibox input { flex: 1; min-width: 0; height: 44px; margin-left: 15px; padding: 0; border: 0; outline: 0; font-family: inherit; font-size: 29px; color: transparent; background: linear-gradient(90deg, #000 115px, #6b6b6b 115px); background-clip: text; -webkit-background-clip: text; }

  .page { flex: 1; }
  .page header { background: #c22f29; padding: 18px 40px 24px; }
  h1 { margin: 0; font-size: 52px; line-height: 60px; color: #f0f0f0; }
  h2 { margin: 0; padding: 31px 40px; font-size: 39px; line-height: 50px; color: #c22f29; }

  .dock { position: relative; display: flex; justify-self: center; height: 126px; padding: 0 8px; border-radius: 12px 12px 0 0; background: #5d5b5d; box-shadow: 0 0 60px rgba(0, 0, 0, 0.18); }
  .dock-item { position: relative; width: 102px; height: 126px; }
  .dock-item svg { width: 102px; height: 126px; }
  .running { position: absolute; left: 48px; bottom: 4px; width: 8px; height: 8px; border-radius: 50%; background: #000; }
  .divider { width: 48px; height: 94px; margin-top: 16px; background: linear-gradient(#343236, #343236) center / 2px 100% no-repeat; }
</style>
